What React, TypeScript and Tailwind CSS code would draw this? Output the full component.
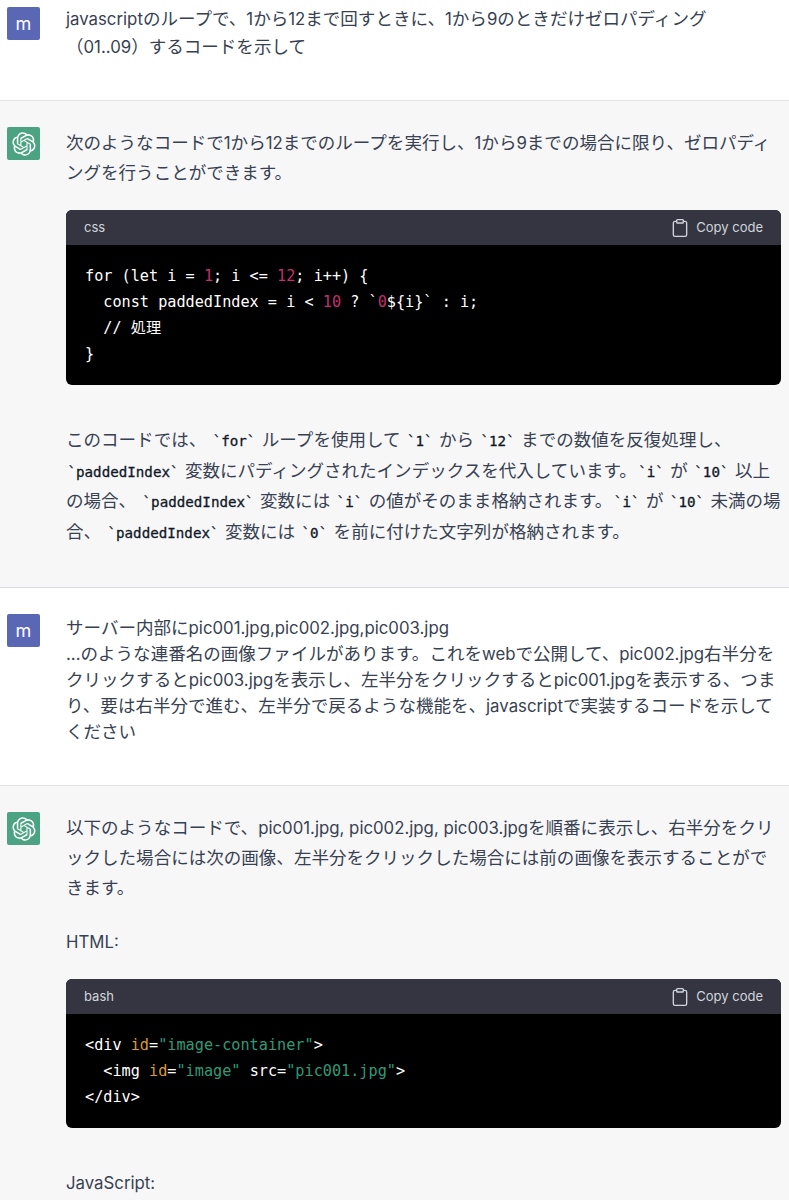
const sans = "font-['Inter','Noto_Sans_CJK_JP',sans-serif]";
const mono = "font-['DejaVu_Sans_Mono','Noto_Sans_CJK_JP',monospace]";

const logoPath =
  "M37.5324 16.8707C37.9808 15.5241 38.1363 14.0974 37.9886 12.6859C37.8409 11.2744 37.3934 9.91076 36.676 8.68622C35.6126 6.83404 33.9882 5.3676 32.0373 4.4985C30.0864 3.62941 27.9098 3.40259 25.8215 3.85078C24.8796 2.7893 23.7219 1.94125 22.4257 1.36341C21.1295 0.785575 19.7249 0.491269 18.3058 0.500197C16.1708 0.495044 14.0893 1.16803 12.3614 2.42214C10.6335 3.67624 9.34853 5.44666 8.6917 7.47815C7.30085 7.76286 5.98686 8.3414 4.8377 9.17505C3.68854 10.0087 2.73073 11.0782 2.02839 12.312C0.956464 14.1591 0.498905 16.2988 0.721698 18.4228C0.944492 20.5467 1.83612 22.5449 3.268 24.1293C2.81966 25.4759 2.66413 26.9026 2.81182 28.3141C2.95951 29.7256 3.40701 31.0892 4.12437 32.3138C5.18791 34.1659 6.8123 35.6322 8.76321 36.5013C10.7141 37.3704 12.8907 37.5973 14.9789 37.1492C15.9208 38.2107 17.0786 39.0587 18.3747 39.6366C19.6709 40.2144 21.0755 40.5087 22.4946 40.4998C24.6307 40.5054 26.7133 39.8321 28.4418 38.5772C30.1704 37.3223 31.4556 35.5506 32.1119 33.5179C33.5027 33.2332 34.8167 32.6547 35.9659 31.821C37.115 30.9874 38.0728 29.9178 38.7752 28.684C39.8458 26.8371 40.3023 24.6979 40.0789 22.5748C39.8556 20.4517 38.9639 18.4544 37.5324 16.8707ZM22.4978 37.8849C20.7443 37.8874 19.0459 37.2733 17.6994 36.1501C17.7601 36.117 17.8666 36.0586 17.936 36.0161L25.9004 31.4156C26.1003 31.3019 26.2663 31.137 26.3813 30.9378C26.4964 30.7386 26.5563 30.5124 26.5549 30.2825V19.0542L29.9213 20.998C29.9389 21.0068 29.9541 21.0198 29.9656 21.0359C29.977 21.052 29.9842 21.0707 29.9867 21.0902V30.3889C29.9842 32.375 29.1946 34.2791 27.7909 35.6841C26.3872 37.0892 24.4838 37.8806 22.4978 37.8849ZM6.39227 31.0064C5.51397 29.4888 5.19742 27.7107 5.49804 25.9832C5.55718 26.0187 5.66048 26.0818 5.73461 26.1244L13.699 30.7248C13.8975 30.8408 14.1233 30.902 14.3532 30.902C14.583 30.902 14.8088 30.8408 15.0073 30.7248L24.731 25.1103V28.9979C24.7321 29.0177 24.7283 29.0376 24.7199 29.0556C24.7115 29.0736 24.6988 29.0893 24.6829 29.1012L16.6317 33.7497C14.9096 34.7416 12.8643 35.0097 10.9447 34.4954C9.02506 33.9811 7.38785 32.7263 6.39227 31.0064ZM4.29707 13.6194C5.17156 12.0998 6.55279 10.9364 8.19885 10.3327C8.19885 10.4013 8.19491 10.5228 8.19491 10.6071V19.808C8.19351 20.0378 8.25334 20.2638 8.36823 20.4629C8.48312 20.6619 8.64893 20.8267 8.84863 20.9404L18.5723 26.5542L15.206 28.4979C15.1894 28.5089 15.1703 28.5155 15.1505 28.5173C15.1307 28.5191 15.1107 28.516 15.0924 28.5082L7.04046 23.8557C5.32135 22.8601 4.06716 21.2235 3.55289 19.3046C3.03862 17.3858 3.30624 15.3413 4.29707 13.6194ZM31.955 20.0556L22.2312 14.4411L25.5976 12.4981C25.6142 12.4872 25.6333 12.4805 25.6531 12.4787C25.6729 12.4769 25.6928 12.4801 25.7111 12.4879L33.7631 17.1364C34.9967 17.849 36.0017 18.8982 36.6606 20.1613C37.3194 21.4244 37.6047 22.849 37.4832 24.2684C37.3617 25.6878 36.8382 27.0432 35.9743 28.1759C35.1103 29.3086 33.9415 30.1717 32.6047 30.6641C32.6047 30.5947 32.6047 30.4733 32.6047 30.3889V21.188C32.6066 20.9586 32.5474 20.7328 32.4332 20.5338C32.319 20.3348 32.154 20.1698 31.955 20.0556ZM35.3055 15.0128C35.2464 14.9765 35.1431 14.9142 35.069 14.8717L27.1045 10.2712C26.906 10.1554 26.6803 10.0943 26.4504 10.0943C26.2206 10.0943 25.9948 10.1554 25.7963 10.2712L16.0726 15.8858V11.9982C16.0715 11.9783 16.0753 11.9585 16.0837 11.9405C16.0921 11.9225 16.1048 11.9068 16.1207 11.8949L24.1719 7.25025C25.4053 6.53903 26.8158 6.19376 28.2383 6.25482C29.6608 6.31589 31.0364 6.78077 32.2044 7.59508C33.3723 8.40939 34.2842 9.53945 34.8334 10.8531C35.3826 12.1667 35.5464 13.6095 35.3055 15.0128ZM14.2424 21.9419L10.8752 19.9981C10.8576 19.9893 10.8423 19.9763 10.8309 19.9602C10.8195 19.9441 10.8122 19.9254 10.8098 19.9058V10.6071C10.8107 9.18295 11.2173 7.78848 11.9819 6.58696C12.7466 5.38544 13.8377 4.42659 15.1275 3.82264C16.4173 3.21869 17.8524 2.99464 19.2649 3.1767C20.6775 3.35876 22.0089 3.93941 23.1034 4.85067C23.0427 4.88379 22.937 4.94215 22.8668 4.98473L14.9024 9.58517C14.7025 9.69878 14.5366 9.86356 14.4215 10.0626C14.3065 10.2616 14.2466 10.4877 14.2479 10.7175L14.2424 21.9419ZM16.071 17.9991L20.4018 15.4978L24.7325 17.9975V22.9985L20.4018 25.4983L16.071 22.9985V17.9991Z";

function UserAvatar({ className = "" }: { className?: string }) {
  return (
    <div className={`flex h-[33px] w-[33px] shrink-0 items-center justify-center rounded-[2px] bg-[#5a67b5] text-[18px] text-white ${className}`}>
      m
    </div>
  );
}

function BotAvatar() {
  return (
    <div className="flex h-[33px] w-[33px] shrink-0 items-center justify-center rounded-[2px] bg-[#4ba383]">
      <svg viewBox="0 0 41 41" className="h-[24px] w-[24px]" fill="white">
        <path d={logoPath} />
      </svg>
    </div>
  );
}

function CodeBlock({ lang, children }: { lang: string; children: React.ReactNode }) {
  return (
    <div className="overflow-hidden rounded-md bg-black">
      <div className={`${sans} flex h-[35px] items-center justify-between bg-[#343541] px-[18px] text-[13px] text-[#d1d5db]`}>
        <span>{lang}</span>
        <span className="flex items-center gap-[6px]">
          <svg viewBox="0 0 24 24" className="h-[20px] w-[20px]" fill="none" stroke="currentColor" strokeWidth="1.6" strokeLinecap="round" strokeLinejoin="round">
            <path d="M16 4h2a2 2 0 0 1 2 2v14a2 2 0 0 1-2 2H6a2 2 0 0 1-2-2V6a2 2 0 0 1 2-2h2" />
            <rect x="8" y="2" width="8" height="4" rx="1" ry="1" />
          </svg>
          Copy code
        </span>
      </div>
      <pre className={`${mono} py-[18px] pl-[19px] pr-[20px] text-[15.2px] leading-[26px] text-white`}>{children}</pre>
    </div>
  );
}

const Num = ({ children }: { children: React.ReactNode }) => <span className="text-[#c72e6e]">{children}</span>;
const Attr = ({ children }: { children: React.ReactNode }) => <span className="text-[#df9a2e]">{children}</span>;
const Str = ({ children }: { children: React.ReactNode }) => <span className="text-[#2e9b78]">{children}</span>;
const Code = ({ children }: { children: React.ReactNode }) => (
  <code className={`${mono} mx-[1.5px] text-[14.2px] leading-none text-[#111827] [-webkit-text-stroke:0.3px]`}>{children}</code>
);
// latin runs sit a little smaller than the kana around them
const L = ({ children }: { children: React.ReactNode }) => <span className="text-[16.8px]">{children}</span>;

export default function App() {
  return (
    <div className={`${sans} h-[1200px] w-[789px] overflow-hidden bg-white text-[17.55px] text-[#374151]`}>
      <section className="flex h-[101px] gap-[26px] border-b border-[#e3e3e6] pl-[7px] pr-[8px] pt-[5px] leading-[28px]">
        <UserAvatar className="mt-[2px]" />
        <div className="whitespace-nowrap">
          <p><L>javascript</L>のループで、<L>1</L>から<L>12</L>まで回すときに、<L>1</L>から<L>9</L>のときだけゼロパディング</p>
          <p>（<L>01..09</L>）するコードを示して</p>
        </div>
      </section>

      <section className="flex h-[487px] gap-[26px] border-b border-[#dcdce0] bg-[#f7f7f8] pl-[7px] pr-[8px] pt-[26px]">
        <BotAvatar />
        <div className="min-w-0 flex-1 pt-[1px]">
          <p className="whitespace-nowrap leading-[29px]">
            次のようなコードで<L>1</L>から<L>12</L>までのループを実行し、<L>1</L>から<L>9</L>までの場合に限り、ゼロパディ
            <br />
            ングを行うことができます。
          </p>
          <div className="mt-[23px]">
            <CodeBlock lang="css">
              {"for (let i = "}<Num>1</Num>{"; i <= "}<Num>12</Num>{"; i++) {\n  const paddedIndex = i < "}<Num>10</Num>{" ? `"}<Num>0</Num>{"${i}` : i;\n  // 処理\n}"}
            </CodeBlock>
          </div>
          <p className="mt-[40px] whitespace-nowrap leading-[30.7px]">
            このコードでは、 <Code>`for`</Code> ループを使用して <Code>`1`</Code> から <Code>`12`</Code> までの数値を反復処理し、
            <br />
            <Code>`paddedIndex`</Code> 変数にパディングされたインデックスを代入しています。<Code>`i`</Code> が <Code>`10`</Code> 以上
            <br />
            の場合、 <Code>`paddedIndex`</Code> 変数には <Code>`i`</Code> の値がそのまま格納されます。<Code>`i`</Code> が <Code>`10`</Code> 未満の場
            <br />
            合、 <Code>`paddedIndex`</Code> 変数には <Code>`0`</Code> を前に付けた文字列が格納されます。
          </p>
        </div>
      </section>

      <section className="flex h-[198px] gap-[26px] border-b border-[#e3e3e6] pl-[7px] pr-[8px] pt-[26px] leading-[26px]">
        <UserAvatar />
        <div className="whitespace-nowrap pt-[1px]">
          <p>サーバー内部に<L>pic001.jpg,pic002.jpg,pic003.jpg</L></p>
          <p><L>...</L>のような連番名の画像ファイルがあります。これを<L>web</L>で公開して、<L>pic002.jpg</L>右半分を</p>
          <p>クリックすると<L>pic003.jpg</L>を表示し、左半分をクリックすると<L>pic001.jpg</L>を表示する、つま</p>
          <p>り、要は右半分で進む、左半分で戻るような機能を、<L>javascript</L>で実装するコードを示して</p>
          <p>ください</p>
        </div>
      </section>

      <section className="flex h-[414px] gap-[26px] bg-[#f7f7f8] pl-[7px] pr-[8px] pt-[26px]">
        <BotAvatar />
        <div className="min-w-0 flex-1 pt-[1px]">
          <p className="whitespace-nowrap leading-[30px]">
            以下のようなコードで、<L>pic001.jpg, pic002.jpg, pic003.jpg</L>を順番に表示し、右半分をクリ
            <br />
            ックした場合には次の画像、左半分をクリックした場合には前の画像を表示することがで
            <br />
            きます。
          </p>
          <p className="mt-[24px] leading-[30px]"><L>HTML:</L></p>
          <div className="mt-[22px]">
            <CodeBlock lang="bash">
              {'<div '}<Attr>id</Attr>{'='}<Str>"image-container"</Str>{'>\n  <img '}<Attr>id</Attr>{'='}<Str>"image"</Str>{' src='}<Str>"pic001.jpg"</Str>{'>\n</div>'}
            </CodeBlock>
          </div>
          <p className="mt-[40px] leading-[30px]"><L>JavaScript:</L></p>
        </div>
      </section>
    </div>
  );
}
